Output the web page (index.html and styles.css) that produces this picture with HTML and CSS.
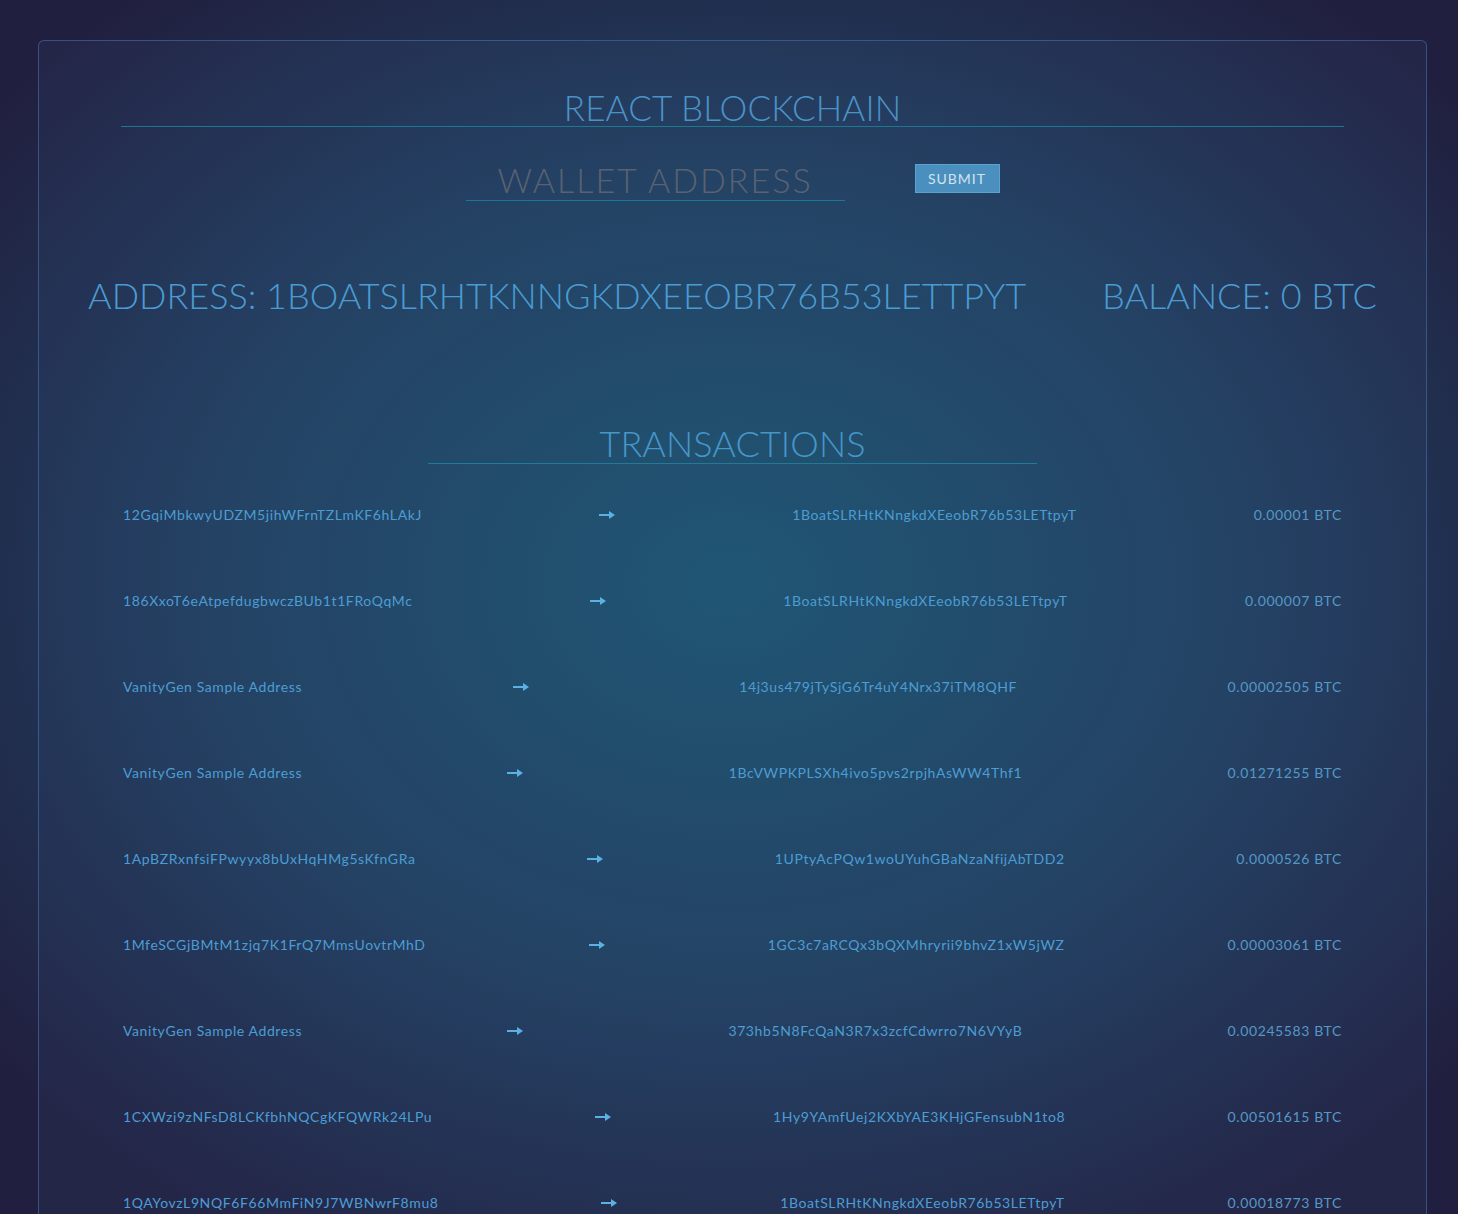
FILE: index.html
```html
<!DOCTYPE html>
<html lang="en">
<head>
<meta charset="utf-8">
<title>React Blockchain</title>
<link rel="stylesheet" href="styles.css">
</head>
<body>
<main class="card">
  <h1 class="title">REACT BLOCKCHAIN</h1>
  <form class="search">
    <input class="search-input" type="text" placeholder="WALLET ADDRESS">
    <button class="search-btn" type="button">SUBMIT</button>
  </form>
  <section class="summary">
    <span class="summary-item">ADDRESS: 1BOATSLRHTKNNGKDXEEOBR76B53LETTPYT</span>
    <span class="summary-item">BALANCE: 0 BTC</span>
  </section>
  <h2 class="subtitle">TRANSACTIONS</h2>
  <ul class="tx-list">
    <li class="tx"><span class="tx-from">12GqiMbkwyUDZM5jihWFrnTZLmKF6hLAkJ</span><svg class="tx-arrow" viewBox="0 0 16 8" width="16" height="8"><path d="M0 3h11v2H0z M10 0l6 4-6 4z"/></svg><span class="tx-to">1BoatSLRHtKNngkdXEeobR76b53LETtpyT</span><span class="tx-amount">0.00001 BTC</span></li>
    <li class="tx"><span class="tx-from">186XxoT6eAtpefdugbwczBUb1t1FRoQqMc</span><svg class="tx-arrow" viewBox="0 0 16 8" width="16" height="8"><path d="M0 3h11v2H0z M10 0l6 4-6 4z"/></svg><span class="tx-to">1BoatSLRHtKNngkdXEeobR76b53LETtpyT</span><span class="tx-amount">0.000007 BTC</span></li>
    <li class="tx"><span class="tx-from">VanityGen Sample Address</span><svg class="tx-arrow" viewBox="0 0 16 8" width="16" height="8"><path d="M0 3h11v2H0z M10 0l6 4-6 4z"/></svg><span class="tx-to">14j3us479jTySjG6Tr4uY4Nrx37iTM8QHF</span><span class="tx-amount">0.00002505 BTC</span></li>
    <li class="tx"><span class="tx-from">VanityGen Sample Address</span><svg class="tx-arrow" viewBox="0 0 16 8" width="16" height="8"><path d="M0 3h11v2H0z M10 0l6 4-6 4z"/></svg><span class="tx-to">1BcVWPKPLSXh4ivo5pvs2rpjhAsWW4Thf1</span><span class="tx-amount">0.01271255 BTC</span></li>
    <li class="tx"><span class="tx-from">1ApBZRxnfsiFPwyyx8bUxHqHMg5sKfnGRa</span><svg class="tx-arrow" viewBox="0 0 16 8" width="16" height="8"><path d="M0 3h11v2H0z M10 0l6 4-6 4z"/></svg><span class="tx-to">1UPtyAcPQw1woUYuhGBaNzaNfijAbTDD2</span><span class="tx-amount">0.0000526 BTC</span></li>
    <li class="tx"><span class="tx-from">1MfeSCGjBMtM1zjq7K1FrQ7MmsUovtrMhD</span><svg class="tx-arrow" viewBox="0 0 16 8" width="16" height="8"><path d="M0 3h11v2H0z M10 0l6 4-6 4z"/></svg><span class="tx-to">1GC3c7aRCQx3bQXMhryrii9bhvZ1xW5jWZ</span><span class="tx-amount">0.00003061 BTC</span></li>
    <li class="tx"><span class="tx-from">VanityGen Sample Address</span><svg class="tx-arrow" viewBox="0 0 16 8" width="16" height="8"><path d="M0 3h11v2H0z M10 0l6 4-6 4z"/></svg><span class="tx-to">373hb5N8FcQaN3R7x3zcfCdwrro7N6VYyB</span><span class="tx-amount">0.00245583 BTC</span></li>
    <li class="tx"><span class="tx-from">1CXWzi9zNFsD8LCKfbhNQCgKFQWRk24LPu</span><svg class="tx-arrow" viewBox="0 0 16 8" width="16" height="8"><path d="M0 3h11v2H0z M10 0l6 4-6 4z"/></svg><span class="tx-to">1Hy9YAmfUej2KXbYAE3KHjGFensubN1to8</span><span class="tx-amount">0.00501615 BTC</span></li>
    <li class="tx"><span class="tx-from">1QAYovzL9NQF6F66MmFiN9J7WBNwrF8mu8</span><svg class="tx-arrow" viewBox="0 0 16 8" width="16" height="8"><path d="M0 3h11v2H0z M10 0l6 4-6 4z"/></svg><span class="tx-to">1BoatSLRHtKNngkdXEeobR76b53LETtpyT</span><span class="tx-amount">0.00018773 BTC</span></li>
  </ul>
</main>
</body>
</html>
```
FILE: styles.css
```css
html, body {
  margin: 0;
  padding: 0;
  height: 100%;
  overflow: hidden;
}
body {
  font-family: "Lato", "Liberation Sans", sans-serif;
  background: radial-gradient(ellipse 65% 62% at 50% 48%, #1d5470 0%, #213e5e 55%, #211f3f 100%);
  background-color: #211f3f;
  padding: 40px 31px 0 38px;
  box-sizing: border-box;
}
.card {
  box-sizing: border-box;
  min-height: 1300px;
  border: 1px solid rgba(72, 118, 178, 0.55);
  border-radius: 6px;
  background: rgba(62, 108, 168, 0.09);
  padding: 49px 82px 0;
}
.title {
  margin: 0;
  padding-bottom: 2px;
  border-bottom: 1px solid #1b7892;
  text-align: center;
  font-size: 35px;
  line-height: 34px;
  font-weight: 300;
  letter-spacing: 0.15px;
  color: #4a93c6;
}
.search {
  display: flex;
  justify-content: center;
  align-items: flex-start;
  gap: 70px;
  margin-top: 35px;
}
.search-input {
  width: 379px;
  height: 36px;
  box-sizing: content-box;
  padding: 0 0 2px;
  margin: 0;
  border: none;
  border-bottom: 1px solid #1b7892;
  background: transparent;
  font-family: "Lato", "Liberation Sans", sans-serif;
  font-weight: 300;
  font-size: 34px;
  letter-spacing: 2px;
  line-height: 36px;
  text-align: center;
  color: #5a6272;
  outline: none;
}
.search-input::placeholder {
  color: #5a6272;
  opacity: 1;
}
.search-btn {
  margin-top: 2px;
  width: 85px;
  height: 29px;
  padding: 0;
  border: 1px solid #5aa2d0;
  background: #4b8fbe;
  color: #d2e4f1;
  font-family: "Lato", "Liberation Sans", sans-serif;
  font-size: 14px;
  letter-spacing: 1px;
}
.summary {
  display: flex;
  justify-content: center;
  gap: 76px;
  margin: 76px -40px 0;
  font-size: 36px;
  line-height: 36px;
  font-weight: 300;
  letter-spacing: 0;
  color: #4a9bd2;
  white-space: nowrap;
}
.subtitle {
  width: 609px;
  margin: 112px auto 0;
  padding-bottom: 2px;
  border-bottom: 1px solid #1f7b98;
  text-align: center;
  font-size: 36px;
  line-height: 36px;
  font-weight: 300;
  letter-spacing: 0.1px;
  color: #4597c9;
}
.tx-list {
  list-style: none;
  margin: 8px 0 0;
  padding: 0 2px;
}
.tx {
  display: flex;
  justify-content: space-between;
  align-items: center;
  padding: 33px 0;
  font-size: 14px;
  line-height: 20px;
  letter-spacing: 0.6px;
  color: #4c9dd3;
}
.tx-arrow {
  fill: #5ab2e4;
  flex: none;
}
.tx-amount {
  color: #5598c6;
}
```
